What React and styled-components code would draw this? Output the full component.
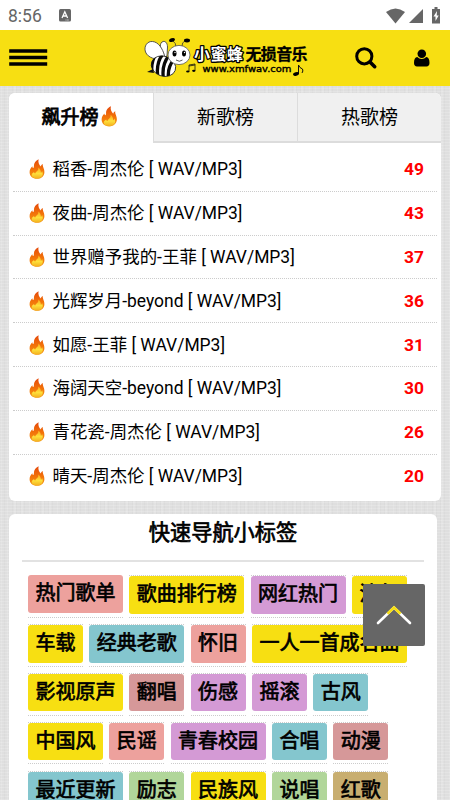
import styled, { createGlobalStyle } from "styled-components"

const GlobalStyle = createGlobalStyle`
    * {
        box-sizing: border-box;
    }

    body {
        margin: 0;
        color: #000;
        font-family: Roboto, 'Noto Sans CJK SC', sans-serif;
        background-color: #dfdfdf;
        background-image:
            repeating-linear-gradient(0deg, rgba(255, 255, 255, .16) 0 1px, transparent 1px 3px),
            repeating-linear-gradient(90deg, rgba(0, 0, 0, .018) 0 1px, transparent 1px 4px),
            repeating-linear-gradient(90deg, rgba(255, 255, 255, .12) 0 2px, transparent 2px 7px);
    }
`

const Page = styled.div`
    height: 800px;
    overflow: hidden;
`

const StatusBar = styled.div`
    display: flex;
    align-items: center;
    height: 30px;
    padding: 1px 8px 0;
    background: #fff;
    color: #666;
    font-size: 17.5px;

    svg {
        display: block;
    }
`

const StatusIcons = styled.div`
    display: flex;
    align-items: center;
    gap: 4px;
    margin-left: auto;
`

const Notice = styled.svg`
    margin-left: 17px;
`

const Header = styled.header`
    display: flex;
    align-items: center;
    height: 56px;
    padding: 0 19px 0 9px;
    background: #f7df12;

    svg {
        display: block;
        flex: none;
    }
`

const Logo = styled.svg`
    margin-left: 96px;
`

const SearchIcon = styled.svg`
    margin-left: 42px;
`

const UserIcon = styled.svg`
    margin-left: auto;
`

const Card = styled.section`
    width: ${props => props.$width}px;
    margin: ${props => props.$top}px 0 0 9px;
    border-radius: 6px;
    background: #fff;
    overflow: hidden;
`

const Tabs = styled.div`
    display: grid;
    grid-template-columns: 144px 144px 144px;
    height: 50px;
`

const Tab = styled.div`
    display: flex;
    align-items: center;
    justify-content: center;
    padding-bottom: ${props => props.$active ? 5 : 3}px;
    padding-right: ${props => props.$active ? 3 : 0}px;
    font-size: 19px;
    background: ${props => props.$active ? '#fff' : '#f0f0f0'};
    border-left: ${props => props.$active ? 'none' : '1px solid #dcdcdc'};
    border-bottom: ${props => props.$active ? 'none' : '2px solid #dcdcdc'};
    -webkit-text-stroke: ${props => props.$active ? '.8px #000' : '0'};

    svg {
        margin: 3px 0 0 2.5px;
    }
`

const List = styled.ul`
    margin: 0;
    padding: 4px 4px 3px;
    list-style: none;
`

const Song = styled.li`
    display: flex;
    align-items: center;
    height: 43.8px;
    padding: 0 13px 0 16px;
    border-bottom: 1px dotted #ccc;
    font-size: 17.4px;
    white-space: pre;

    &:first-child {
        height: 45.3px;
    }

    &:last-child {
        border-bottom: 0;
    }
`

const SongName = styled.span`
    margin-left: 7.5px;
    padding-bottom: 3px;
    font-size: 17.45px;
`

const Count = styled.b`
    margin-left: auto;
    color: #f00;
    font-size: 17.4px;
`

const Title = styled.h2`
    height: 48px;
    margin: 0 13px;
    border-bottom: 2px solid #e2e2e2;
    font-size: 21.2px;
    font-weight: 400;
    line-height: 38px;
    text-align: center;
    -webkit-text-stroke: .7px #000;
`

const Tags = styled.div`
    display: flex;
    flex-direction: column;
    gap: 6.2px;
    height: 260px;
    padding: 13px 0 0 19px;
`

const TagRow = styled.div`
    display: flex;
    align-items: flex-start;
    gap: 6.3px;
`

const TagCell = styled.div`
    height: 42.6px;
    border-top: ${props => props.$first ? 'none' : '1px dotted #ccc'};
    border-bottom: 1px dotted #ccc;
`

const Tag = styled.span`
    display: block;
    height: 37.5px;
    padding: 0 7.5px;
    border-radius: 3px;
    background: ${props => props.$color};
    font-size: 20px;
    line-height: 37px;
    white-space: nowrap;
    -webkit-text-stroke: .7px #000;
`

const BackTop = styled.button`
    position: fixed;
    top: 584px;
    left: 363px;
    width: 62px;
    height: 62px;
    padding: 0;
    border: 0;
    border-radius: 2px;
    background: #666;

    svg {
        display: block;
    }
`

const yellow = '#f7df12'
const salmon = '#eda19d'
const purple = '#d49ad5'
const teal = '#84c6ce'
const rose = '#d69899'
const green = '#b1d69a'
const tan = '#c8ae70'

const songs = [
    ['稻香-周杰伦', 49],
    ['夜曲-周杰伦', 43],
    ['世界赠予我的-王菲', 37],
    ['光辉岁月-beyond', 36],
    ['如愿-王菲', 31],
    ['海阔天空-beyond', 30],
    ['青花瓷-周杰伦', 26],
    ['晴天-周杰伦', 20],
]

const tagRows = [
    [['热门歌单', salmon], ['歌曲排行榜', yellow], ['网红热门', purple], ['流行', yellow]],
    [['车载', yellow], ['经典老歌', teal], ['怀旧', salmon], ['一人一首成名曲', yellow]],
    [['影视原声', yellow], ['翻唱', rose], ['伤感', purple], ['摇滚', purple], ['古风', teal]],
    [['中国风', yellow], ['民谣', salmon], ['青春校园', purple], ['合唱', teal], ['动漫', rose]],
    [['最近更新', teal], ['励志', green], ['民族风', yellow], ['说唱', green], ['红歌', tan]],
]

const Fire = ({ size = 16 }) => (
    <svg width={size} height={size * 1.25} viewBox="0 0 16 20">
        <defs>
            <linearGradient id="flame" x1="0" y1="0" x2="0" y2="1">
                <stop offset="0" stopColor="#e4480c" />
                <stop offset=".55" stopColor="#f37509" />
                <stop offset="1" stopColor="#f39a17" />
            </linearGradient>
            <linearGradient id="core" x1="0" y1="0" x2="0" y2="1">
                <stop offset="0" stopColor="#fba51a" />
                <stop offset=".55" stopColor="#fee03c" />
                <stop offset="1" stopColor="#f3b11f" />
            </linearGradient>
        </defs>
        <path fill="url(#flame)" d="M9.600.2C6.800 1.400 4.700 4 4.900 7c0 1-.1 1.900-.7 1.900-.7 0-.8-.8-.7-1.700C1.600 8.700.6 10.700.6 13.200.6 17 3.600 19.800 8 19.800s7.400-2.900 7.400-6.900c0-2.700-1.300-4.300-1.600-6.100-.1-.7 0-1.200.1-1.800-1.300.5-1.900 1.400-2 2.500C10.200 6 8.800 3.100 9.600.2z" />
        <path fill="url(#core)" d="M9.200 8.400c.4 1.900-.3 3-1.600 4.100-.9.800-1.200 1.500-1.400 2.100-.8-.3-1.100-.9-1.100-1.600-1.600.8-2.400 1.900-2.400 3.200 0 2 2.300 3.200 5.300 3.200 3.400 0 5.800-2 5.800-4.700 0-1.200-.4-2.100-.9-2.900.1 1-.3 1.700-1 2-.1-2.100-.8-4.200-2.700-5.400z" />
    </svg>
)

const BeeLogo = () => (
    <Logo width="168" height="46" viewBox="144 35 168 46">
        <g fill="#fff" stroke="#444" strokeWidth=".9">
            <path d="M165 57c-4-6-6.500-12-3-15 3-2 5.500 1 5.500 5l-.5 9z" />
            <path d="M163 59c-7 1-15-1-17.500-7-2-6 2-11 7-10.500 6 .5 10 7 12 14z" />
        </g>
        <g transform="rotate(20 163 66)">
            <clipPath id="body"><ellipse cx="163.500" cy="66" rx="12.500" ry="10" /></clipPath>
            <ellipse cx="163.500" cy="66" rx="12.500" ry="10" fill="#fff" stroke="#222" strokeWidth=".8" />
            <path clipPath="url(#body)" fill="none" stroke="#090909" strokeWidth="3.300" d="M153 54q-4 12 3 24M159 54q-4 12 3 24M165 54q-4 12 3 24M171 56q-4 12 3 22" />
        </g>
        <path fill="#111" d="M153 69l-6 3 7 1z" />
        <path fill="none" stroke="#333" strokeWidth=".8" d="M176 47q0-4-3-6M182 46q0-4 3-5" />
        <ellipse cx="172" cy="40" rx="3" ry="1.900" transform="rotate(-18 172 40)" />
        <ellipse cx="187" cy="40.500" rx="3" ry="1.900" />
        <ellipse cx="179" cy="55" rx="11" ry="9.600" fill="#fff" stroke="#555" strokeWidth=".8" />
        <ellipse cx="174.500" cy="53.500" rx="2" ry="2.900" />
        <ellipse cx="184" cy="53.500" rx="2" ry="2.900" />
        <circle cx="175" cy="52.500" r=".7" fill="#fff" />
        <circle cx="184.500" cy="52.500" r=".7" fill="#fff" />
        <path d="M176 60q3.500 2.500 6.500 0" fill="none" stroke="#333" strokeWidth=".8" />
        <path d="M189 71.500V65l6-1v6.500M189 66l6-1" fill="none" stroke="#111" strokeWidth=".8" />
        <ellipse cx="187.800" cy="71.500" rx="1.700" ry="1.100" />
        <ellipse cx="193.800" cy="70.800" rx="1.700" ry="1.100" />
        <g fontFamily="Noto Sans CJK SC, sans-serif">
            <text x="194" y="60.200" textLength="49" fontSize="16" fontWeight="700" fill="#fff" stroke="#000" strokeWidth="2.600" strokeLinejoin="round" paintOrder="stroke">小蜜蜂</text>
            <text x="245.500" y="60.200" textLength="62" fontSize="16" fontWeight="700" stroke="#000" strokeWidth=".3">无损音乐</text>
        </g>
        <text x="202.500" y="71.500" textLength="89" lengthAdjust="spacingAndGlyphs" fontFamily="DejaVu Sans, sans-serif" fontSize="9.300" stroke="#000" strokeWidth=".4">www.xmfwav.com</text>
        <path d="M298.500 74v-9q1 3 4 4 1 2-.5 4" fill="none" stroke="#111" />
        <ellipse cx="296" cy="74" rx="3" ry="1.700" transform="rotate(-15 296 74)" />
    </Logo>
)

const App = () => {
    return (
        <Page>
            <GlobalStyle />
            <StatusBar>
                <span>8:56</span>
                <Notice width="12" height="13" viewBox="0 0 12 13">
                    <rect width="12" height="12.500" rx="1.500" fill="#666" />
                    <path d="M3 9L5.800 2.800 8.600 9M4 7h3.600" fill="none" stroke="#fff" strokeWidth="1.300" />
                    <path d="M6.500 11H10" stroke="#ddd" strokeWidth=".8" strokeDasharray="1 .4" />
                </Notice>
                <StatusIcons>
                    <svg width="19" height="16" viewBox="0 0 19 16">
                        <path d="M0 4Q9.500-3 19 4L9.500 15.500z" fill="#666" />
                    </svg>
                    <svg width="14" height="14" viewBox="0 0 14 14">
                        <path d="M14 0v14H0z" fill="#666" />
                    </svg>
                    <svg width="15" height="17" viewBox="0 0 15 17">
                        <path d="M7.500 0h3v2H13v14.500H5V2h2.500z" fill="#666" />
                        <path d="M10 4L6.500 9.500h2V14l3.200-5.500h-2z" fill="#fff" />
                    </svg>
                </StatusIcons>
            </StatusBar>
            <Header>
                <svg width="39" height="18" viewBox="0 0 39 18">
                    <path d="M.2 2h38M.2 8.500h38M.2 15h38" stroke="#000" strokeWidth="3.300" />
                </svg>
                <BeeLogo />
                <SearchIcon width="24" height="24" viewBox="0 0 24 24">
                    <circle cx="10.300" cy="10.300" r="7.600" fill="none" stroke="#000" strokeWidth="3" />
                    <path d="M16 16l4.700 4.700" stroke="#000" strokeWidth="3.600" strokeLinecap="round" />
                </SearchIcon>
                <UserIcon width="18" height="18" viewBox="0 0 18 18">
                    <path d="M4.300 8C2 8.200 1 10.500 1 14c0 2 1.200 3.500 3 3.500h9.500c1.800 0 3-1.500 3-3.500 0-3.500-1-5.800-3.300-6-1.200 1.200-2.700 1.900-4.400 1.900S5.500 9.200 4.300 8z" />
                    <circle cx="8.800" cy="4.700" r="4.300" />
                </UserIcon>
            </Header>

            <Card $width={432} $top={6.500}>
                <Tabs>
                    <Tab $active>飙升榜<Fire size={16.500} /></Tab>
                    <Tab>新歌榜</Tab>
                    <Tab>热歌榜</Tab>
                </Tabs>
                <List>
                    {songs.map(([name, count]) => (
                        <Song key={name}>
                            <Fire />
                            <SongName>{name} [ WAV/MP3]</SongName>
                            <Count>{count}</Count>
                        </Song>
                    ))}
                </List>
            </Card>

            <Card $width={428} $top={13}>
                <Title>快速导航小标签</Title>
                <Tags>
                    {tagRows.map((row, i) => (
                        <TagRow key={i}>
                            {row.map(([label, color], j) => (
                                <TagCell key={label} $first={i === 0 && j === 0}>
                                    <Tag $color={color}>{label}</Tag>
                                </TagCell>
                            ))}
                        </TagRow>
                    ))}
                </Tags>
            </Card>

            <BackTop aria-label="top">
                <svg width="62" height="62" viewBox="0 0 62 62" fill="none" strokeWidth="2.600">
                    <path d="M15 39l16-15.500L47 39" stroke="#fff" strokeLinecap="round" />
                    <path d="M24.500 29.800l6.500-6.300 6.500 6.300" stroke="#f7df12" />
                </svg>
            </BackTop>
        </Page>
    )
}

export default App
